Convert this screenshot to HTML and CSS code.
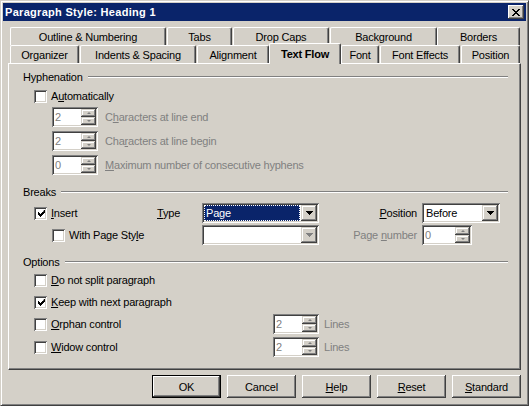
FILE: index.html
```html
<!DOCTYPE html>
<html lang="en">
<head>
    <meta charset="UTF-8">
    <title>Paragraph Style: Heading 1</title>
    <link rel="stylesheet" href="styles.css">
</head>
<body>
<div class="window">
    <div class="titlebar">
        <span class="title">Paragraph Style: Heading 1</span>
        <button class="close">
            <svg width="8" height="7" viewBox="0 0 8 7"><path d="M0 0h2v1h-2zM6 0h2v1h-2zM1 1h2v1h-2zM5 1h2v1h-2zM2 2h4v1h-4zM3 3h2v1h-2zM2 4h4v1h-4zM1 5h2v1h-2zM5 5h2v1h-2zM0 6h2v1h-2zM6 6h2v1h-2z"/></svg>
        </button>
    </div>

    <div class="tabstrip">
        <div class="tab-row">
            <div class="tab t-outline">Outline &amp; Numbering</div>
            <div class="tab t-tabs">Tabs</div>
            <div class="tab t-dropcaps">Drop Caps</div>
            <div class="tab t-background">Background</div>
            <div class="tab t-borders">Borders</div>
        </div>
        <div class="tab-row">
            <div class="tab t-organizer">Organizer</div>
            <div class="tab t-indents">Indents &amp; Spacing</div>
            <div class="tab t-alignment">Alignment</div>
            <div class="tab t-textflow active">Text Flow</div>
            <div class="tab t-font">Font</div>
            <div class="tab t-effects">Font Effects</div>
            <div class="tab t-position">Position</div>
        </div>
    </div>

    <div class="panel">
        <!-- Hyphenation -->
        <div class="group-title"><span>Hyphenation</span></div>
        <div class="row mt2">
            <label class="check"><span class="box"></span>A<u>u</u>tomatically</label>
        </div>
        <div class="row sub mt1">
            <div class="spin disabled"><span class="spin-value">2</span><span class="spin-btns"><span class="up"></span><span class="down"></span></span></div>
            <span class="spin-label disabled">C<u>h</u>aracters at line end</span>
        </div>
        <div class="row sub mt4">
            <div class="spin disabled"><span class="spin-value">2</span><span class="spin-btns"><span class="up"></span><span class="down"></span></span></div>
            <span class="spin-label disabled">Cha<u>r</u>acters at line begin</span>
        </div>
        <div class="row sub mt4">
            <div class="spin disabled"><span class="spin-value">0</span><span class="spin-btns"><span class="up"></span><span class="down"></span></span></div>
            <span class="spin-label disabled"><u>M</u>aximum number of consecutive hyphens</span>
        </div>

        <!-- Breaks -->
        <div class="group-title mt10"><span>Breaks</span></div>
        <div class="row mt4">
            <label class="check c-insert"><span class="box checked"><svg width="7" height="7" viewBox="0 0 7 7"><path d="M6 0h1v3h-1v1h-1v1h-1v1h-1v1h-1v-1h-1v-1h-1v-3h1v1h1v1h1v-1h1v-1h1z"/></svg></span><u>I</u>nsert</label>
            <span class="lbl-type"><u>T</u>ype</span>
            <div class="select focus w-type"><span class="select-value">Page</span><span class="select-btn"><svg width="7" height="4" viewBox="0 0 7 4"><path d="M0 0h7v1h-1v1h-1v1h-1v1h-1v-1h-1v-1h-1v-1h-1z"/></svg></span></div>
            <span class="lbl-right"><u>P</u>osition</span>
            <div class="select w-pos"><span class="select-value">Before</span><span class="select-btn"><svg width="7" height="4" viewBox="0 0 7 4"><path d="M0 0h7v1h-1v1h-1v1h-1v1h-1v-1h-1v-1h-1v-1h-1z"/></svg></span></div>
        </div>
        <div class="row mt2">
            <label class="check c-pagestyle"><span class="box"></span>With Page Sty<u>l</u>e</label>
            <div class="select disabled w-type"><span class="select-value"></span><span class="select-btn"><svg width="7" height="4" viewBox="0 0 7 4"><path d="M0 0h7v1h-1v1h-1v1h-1v1h-1v-1h-1v-1h-1v-1h-1z"/></svg></span></div>
            <span class="lbl-right disabled">Page <u>n</u>umber</span>
            <div class="spin disabled w-pagenum"><span class="spin-value">0</span><span class="spin-btns"><span class="up"></span><span class="down"></span></span></div>
        </div>

        <!-- Options -->
        <div class="group-title mt10"><span>Options</span></div>
        <div class="row mt1">
            <label class="check"><span class="box"></span><u>D</u>o not split paragraph</label>
        </div>
        <div class="row mt2">
            <label class="check"><span class="box checked"><svg width="7" height="7" viewBox="0 0 7 7"><path d="M6 0h1v3h-1v1h-1v1h-1v1h-1v1h-1v-1h-1v-1h-1v-3h1v1h1v1h1v-1h1v-1h1z"/></svg></span><u>K</u>eep with next paragraph</label>
        </div>
        <div class="row mt2">
            <label class="check c-opt"><span class="box"></span><u>O</u>rphan control</label>
            <div class="spin disabled"><span class="spin-value">2</span><span class="spin-btns"><span class="up"></span><span class="down"></span></span></div>
            <span class="lines disabled">Lines</span>
        </div>
        <div class="row mt3">
            <label class="check c-opt"><span class="box"></span><u>W</u>idow control</label>
            <div class="spin disabled"><span class="spin-value">2</span><span class="spin-btns"><span class="up"></span><span class="down"></span></span></div>
            <span class="lines disabled">Lines</span>
        </div>
    </div>

    <div class="buttons">
        <button class="btn default">OK</button>
        <button class="btn">Cancel</button>
        <button class="btn"><u>H</u>elp</button>
        <button class="btn"><u>R</u>eset</button>
        <button class="btn"><u>S</u>tandard</button>
    </div>
</div>
</body>
</html>
```

FILE: styles.css
```css
* {
    margin: 0;
    padding: 0;
    box-sizing: border-box;
}

body {
    background: #d4d0c8;
    font-family: "Liberation Sans", Arial, sans-serif;
    font-size: 11px;
    letter-spacing: -0.2px;
    color: #000;
}

u {
    text-decoration: underline;
    text-underline-offset: 1px;
}

/* window frame */
.window {
    width: 529px;
    height: 406px;
    padding: 2px;
    border: 1px solid;
    border-color: #d4d0c8 #404040 #404040 #d4d0c8;
    box-shadow: inset 1px 1px #fff, inset -1px -1px #808080;
}

.titlebar {
    height: 18px;
    background: #0a246a;
    display: flex;
    align-items: center;
    padding-left: 2px;
}

.title {
    color: #fff;
    font-weight: bold;
    letter-spacing: 0.3px;
}

.close {
    margin-left: auto;
    margin-right: 2px;
    width: 16px;
    height: 14px;
    border: none;
    background: #d4d0c8;
    display: flex;
    align-items: center;
    justify-content: center;
    box-shadow: inset -1px -1px #404040, inset 1px 1px #fff, inset -2px -2px #808080, inset 2px 2px #d4d0c8;
}

/* raised / sunken bevels */
.select-btn,
.spin-btns span {
    box-shadow: inset -1px -1px #404040, inset 1px 1px #d4d0c8, inset -2px -2px #808080, inset 2px 2px #fff;
    background: #d4d0c8;
}

.box,
.spin,
.select {
    background: #fff;
    box-shadow: inset 1px 1px #808080, inset -1px -1px #fff, inset 2px 2px #404040, inset -2px -2px #d4d0c8;
}

/* tabs */
.tabstrip {
    margin: 6px 0 0 7px;
}

.tab-row {
    display: flex;
    align-items: flex-start;
    height: 18px;
}

.tab {
    height: 18px;
    margin-right: 1px;
    border-top: 1px solid #fff;
    border-left: 1px solid #fff;
    border-right: 1px solid #404040;
    border-radius: 2px 2px 0 0;
    box-shadow: inset -1px 0 #808080;
    display: flex;
    align-items: center;
    justify-content: center;
    white-space: nowrap;
    background: #d4d0c8;
}

.tab.active {
    height: 21px;
    margin-top: -2px;
    margin-right: 0;
    font-weight: bold;
    position: relative;
    z-index: 1;
}

.t-outline { width: 156px; }
.t-tabs { width: 65px; }
.t-dropcaps { width: 96px; }
.t-background { width: 107px; margin-right: 0; }
.t-borders { width: 83px; }
.t-organizer { width: 69px; }
.t-indents { width: 116px; }
.t-alignment { width: 72px; margin-right: 0; }
.t-textflow { width: 72px; }
.t-font { width: 38px; }
.t-effects { width: 80px; }
.t-position { width: 59px; }

/* page */
.panel {
    margin: 0 5px;
    height: 307px;
    padding: 6px 12px 0 14px;
    border: 1px solid;
    border-color: #fff #404040 #404040 #fff;
    box-shadow: inset -1px -1px #808080;
}

.group-title {
    display: flex;
    align-items: center;
    height: 14px;
}

.group-title::after {
    content: "";
    flex: 1;
    margin-left: 5px;
    border-top: 1px solid #808080;
    border-bottom: 1px solid #fff;
}

.row {
    display: flex;
    align-items: center;
    height: 20px;
    padding-left: 11px;
    white-space: nowrap;
}

.row.sub {
    padding-left: 29px;
}

.mt1 { margin-top: 1px; }
.mt2 { margin-top: 2px; }
.mt3 { margin-top: 3px; }
.mt4 { margin-top: 4px; }
.mt10 { margin-top: 10px; }

.disabled {
    color: #808080;
}

.check {
    display: flex;
    align-items: center;
}

.box {
    width: 13px;
    height: 13px;
    margin-right: 4px;
    display: flex;
    align-items: center;
    justify-content: center;
}

.box svg {
    margin: 1px 0 0 1px;
}

.c-insert { width: 123px; }
.c-pagestyle { width: 168px; padding-left: 18px; }
.c-opt { width: 239px; }

.lbl-type {
    width: 45px;
}

.lbl-right {
    width: 103px;
    text-align: right;
    padding-right: 5px;
}

/* spin field */
.spin {
    width: 46px;
    height: 20px;
    padding: 2px;
    display: flex;
}

.w-pagenum {
    width: 50px;
}

.spin-value {
    flex: 1;
    padding-left: 1px;
    line-height: 16px;
}

.spin-btns {
    width: 15px;
    display: flex;
    flex-direction: column;
}

.spin-btns span {
    flex: 1;
    display: flex;
    align-items: center;
    justify-content: center;
}

.spin-btns .up::after,
.spin-btns .down::after {
    content: "";
    border-left: 2px solid transparent;
    border-right: 2px solid transparent;
}

.spin-btns .up::after {
    border-bottom: 2px solid #808080;
}

.spin-btns .down::after {
    border-top: 2px solid #808080;
}

.spin-label {
    margin-left: 7px;
}

.lines {
    margin-left: 5px;
}

/* list box */
.select {
    height: 20px;
    padding: 2px;
    display: flex;
}

.w-type { width: 117px; }
.w-pos { width: 78px; }

.select-value {
    flex: 1;
    padding-left: 2px;
    line-height: 16px;
}

.select.focus .select-value {
    background: #0a246a;
    color: #fff;
    outline: 1px dotted #fff;
    outline-offset: -1px;
    margin-right: 1px;
}

.select-btn {
    width: 16px;
    display: flex;
    align-items: center;
    justify-content: center;
}

.select.disabled .select-btn svg {
    fill: #808080;
}

/* dialog buttons */
.buttons {
    display: flex;
    justify-content: flex-end;
    gap: 6px;
    margin-top: 5px;
    padding-right: 5px;
}

.btn {
    width: 69px;
    height: 23px;
    border: none;
    background: #d4d0c8;
    font-family: inherit;
    font-size: 11px;
    letter-spacing: -0.2px;
    color: #000;
    box-shadow: inset -1px -1px #404040, inset 1px 1px #fff, inset -2px -2px #808080, inset 2px 2px #d4d0c8;
}

.btn.default {
    border: 1px solid #000;
}
```
